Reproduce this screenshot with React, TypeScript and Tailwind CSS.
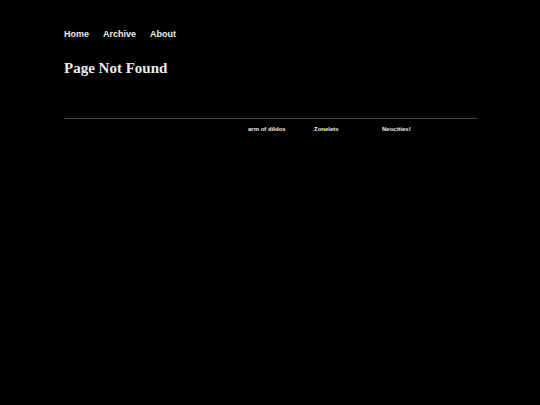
export default function App() {
  return (
    <main className="min-h-[405px] bg-black text-[#ededed]">
      <div className="ml-[64px] w-[413px] pt-[29px]">
        <nav
          className="flex gap-[14px] text-[9px] font-bold leading-[10px] h-[10px]"
          style={{ fontFamily: '"Liberation Sans", Arial, sans-serif' }}
        >
          <a href="#">Home</a>
          <a href="#">Archive</a>
          <a href="#">About</a>
        </nav>
        <h1
          className="mt-[22px] h-[15px] text-[15px] font-bold leading-[15px]"
          style={{ fontFamily: '"Liberation Serif", "Times New Roman", serif' }}
        >
          Page Not Found
        </h1>
        <footer className="mt-[42px] border-t border-[#444]">
          <div
            className="mt-[7px] flex pl-[184px] text-[6px] font-bold leading-[6px]"
            style={{ fontFamily: '"Liberation Sans", Arial, sans-serif' }}
          >
            <a href="#" className="w-[66px]">arm of dildos</a>
            <a href="#" className="w-[68px]">Zonelets</a>
            <a href="#">Neocities!</a>
          </div>
        </footer>
      </div>
    </main>
  );
}
